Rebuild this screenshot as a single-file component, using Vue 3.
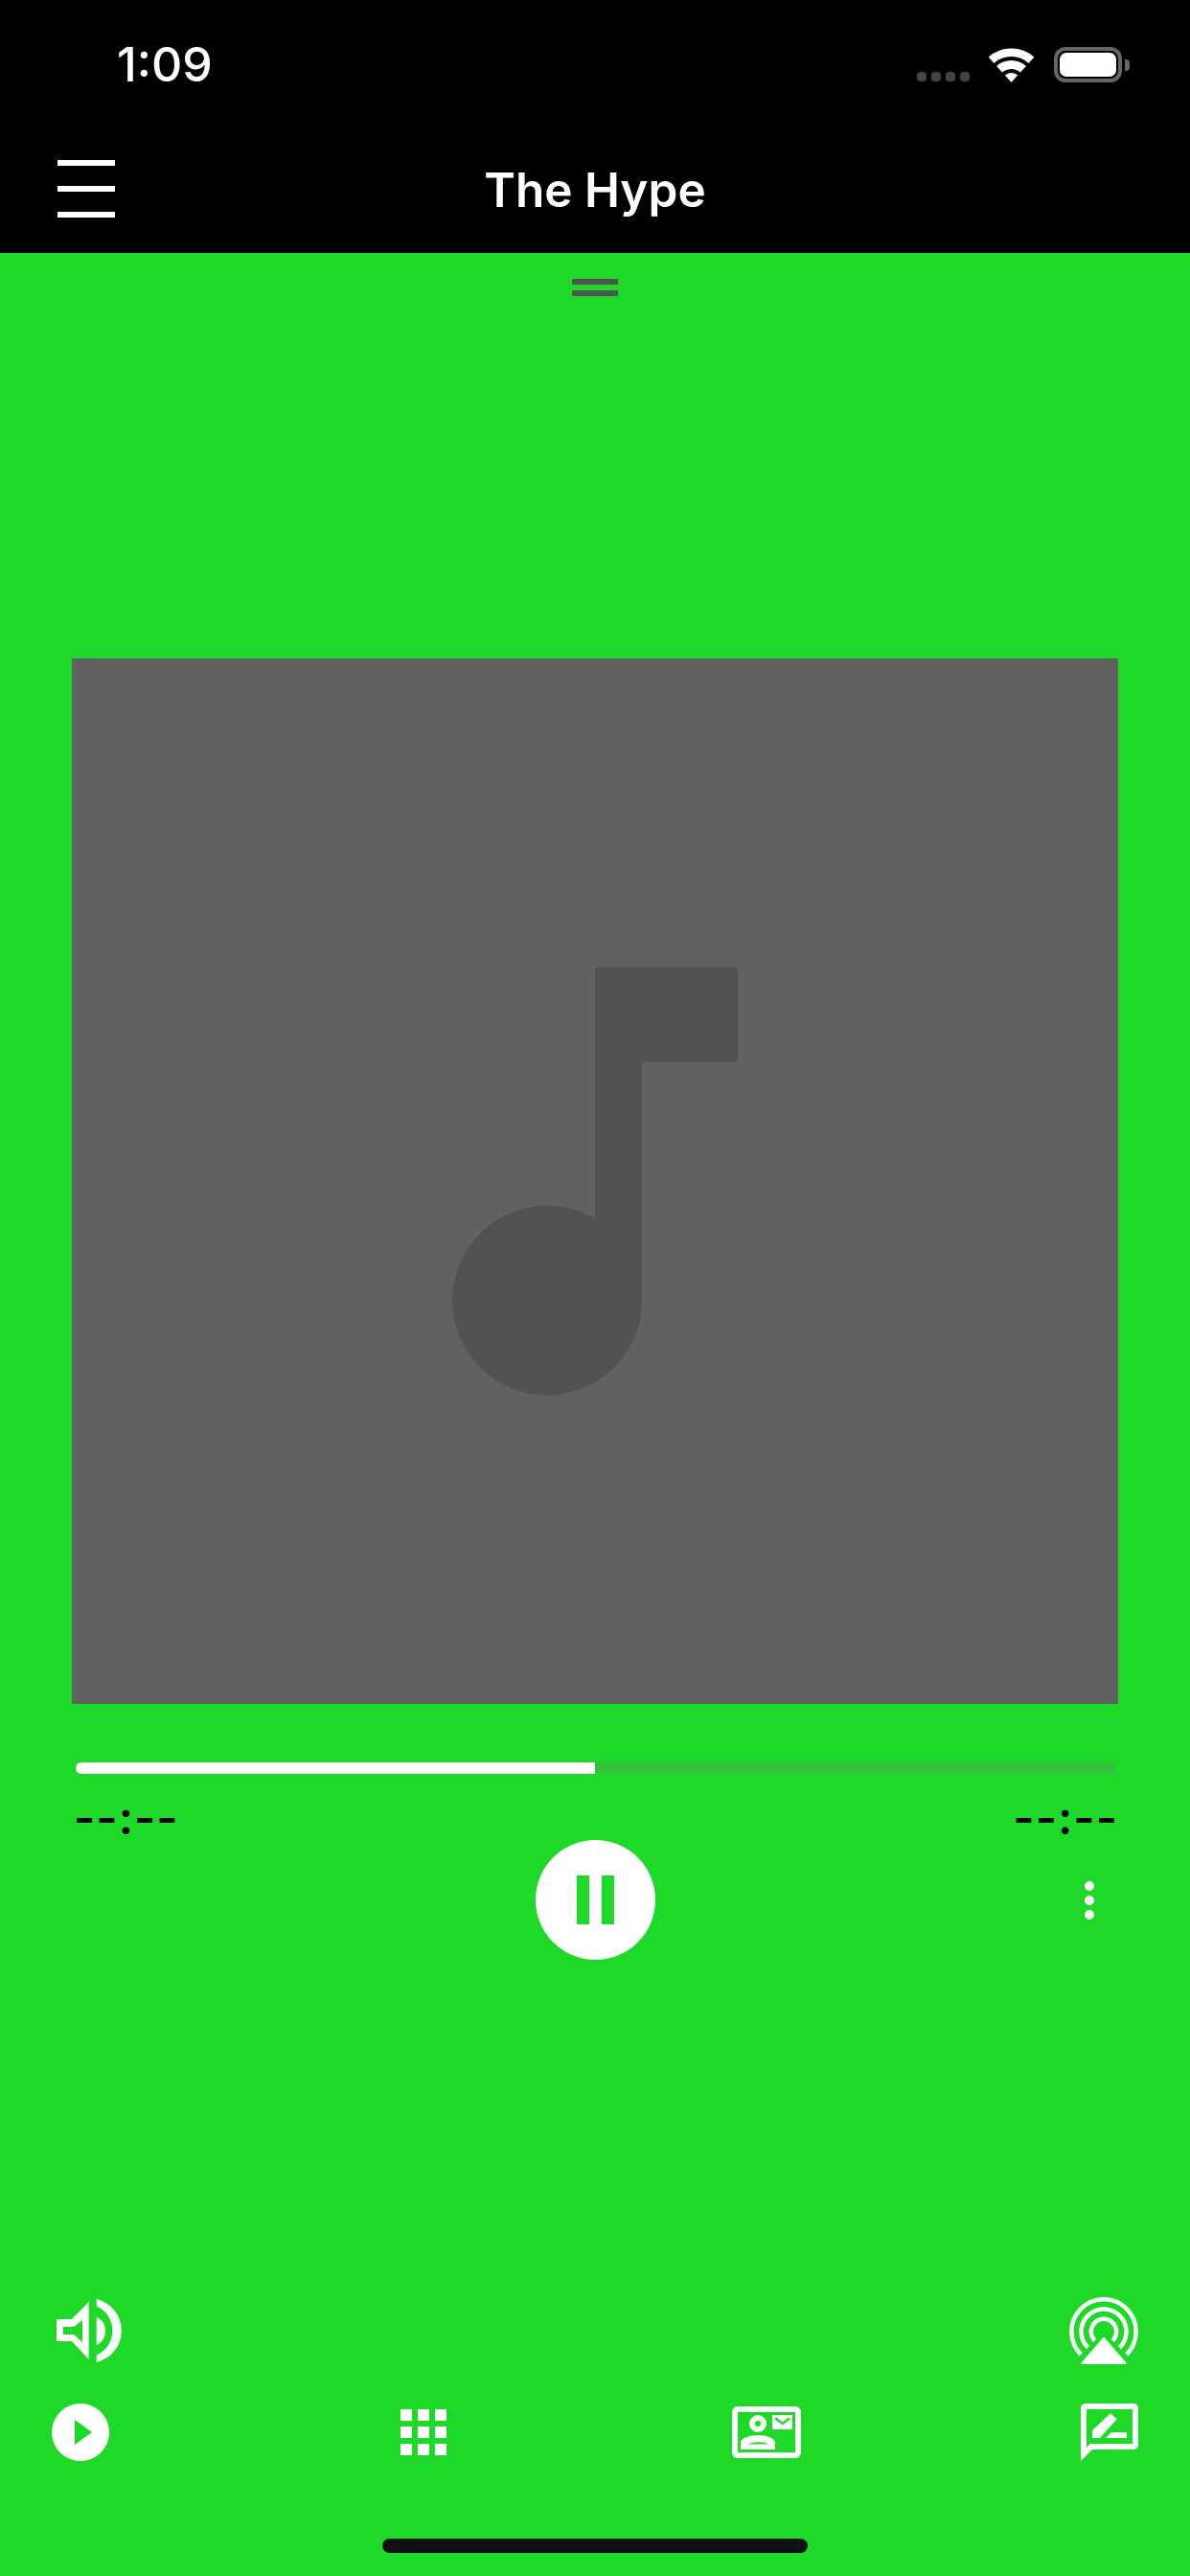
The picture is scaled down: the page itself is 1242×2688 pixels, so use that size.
<template>
  <div class="player">
    <header class="top">
      <div class="status">
        <span class="clock">1:09</span>
        <div class="status-icons">
          <div class="signal"><i></i><i></i><i></i><i></i></div>
          <svg class="wifi" viewBox="0 0 47 36" width="47" height="36">
            <path d="M-.25 9.6A35.5 35.5 0 0 1 47.25 9.6L41.6 16A27 27 0 0 0 5.4 16Z" />
            <path d="M8.1 18.9A23 23 0 0 1 38.9 18.9L32.9 25.6A14 14 0 0 0 14.1 25.6Z" />
            <path d="M16.8 28.6A10 10 0 0 1 30.2 28.6L23.5 36Z" />
          </svg>
          <div class="battery"><div class="battery-fill"></div></div>
        </div>
      </div>
      <div class="nav">
        <div class="burger"><i></i><i></i><i></i></div>
        <span class="title">The Hype</span>
      </div>
    </header>

    <div class="handle"><i></i><i></i></div>

    <div class="artwork">
      <svg viewBox="0 0 298 448" width="298" height="448">
        <path d="M149 0H298V99H198V349A99 99 0 1 1 149 262.5Z" fill="#525252" />
      </svg>
    </div>

    <div class="progress"><div class="progress-fill" :style="{ width: progress + '%' }"></div></div>
    <div class="times">
      <span>--:--</span>
      <span>--:--</span>
    </div>

    <div class="controls">
      <div></div>
      <button class="pause">
        <i></i><i></i>
      </button>
      <div class="more"><i></i><i></i><i></i></div>
    </div>

    <div class="bottom">
      <div class="row row-top">
        <svg viewBox="0 0 68 66" width="68" height="66" fill="#fff">
          <path fill-rule="evenodd" d="M0 21H16L33.7 3V63L16 44H0ZM7 29V37H18L27 45V22L18 29Z" />
          <path d="M41.7 19C47 21 51 26 51 33C51 40 47 46 41.7 48Z" />
          <path d="M41.7 0A33.9 33.9 0 0 1 41.7 66V58.5A27.8 27.8 0 0 0 41.7 7.5Z" />
        </svg>
        <svg viewBox="0 0 72 70" width="72" height="70">
          <g fill="none" stroke="#fff" stroke-width="4.5">
            <path d="M12.2 59.8A33.7 33.7 0 1 1 59.8 59.8" />
            <path d="M19.4 52.6A23.5 23.5 0 1 1 52.6 52.6" />
            <path d="M26.7 45.3A13.2 13.2 0 1 1 45.3 45.3" />
          </g>
          <path d="M36 43L58.5 69H13.5Z" fill="#fff" stroke="#fff" stroke-width="2" stroke-linejoin="round" />
        </svg>
      </div>
      <div class="row row-tabs">
        <div class="slot">
          <svg viewBox="0 0 60 60" width="60" height="60">
            <circle cx="30" cy="30" r="30" fill="#fff" />
            <path d="M24 17L42 30L24 43Z" fill="#1ed928" />
          </svg>
        </div>
        <div class="slot">
          <div class="keypad"><i v-for="n in 9" :key="n"></i></div>
        </div>
        <div class="slot">
          <svg viewBox="0 0 72 54" width="72" height="54">
            <rect x="3" y="3" width="66" height="48" rx="3" fill="none" stroke="#fff" stroke-width="6" />
            <circle cx="27" cy="18" r="6" fill="none" stroke="#fff" stroke-width="6" />
            <path fill="#fff" fill-rule="evenodd" d="M9 45V38C9 33 18 30 27 30C36 30 45 33 45 38V45ZM17 39.5H38C33 36.5 22 36.5 17 39.5Z" />
            <rect x="42" y="9" width="21" height="15" fill="#fff" />
            <path d="M45 12.3L52.7 18L60.3 12.3" fill="none" stroke="#1ed928" stroke-width="2.5" />
          </svg>
        </div>
        <div class="slot">
          <svg viewBox="0 0 60 60" width="60" height="60" fill="#fff">
            <path fill-rule="evenodd" d="M0 60V5A5 5 0 0 1 5 0H55A5 5 0 0 1 60 5V43A5 5 0 0 1 55 48H12ZM6 46L10 42H54V6H6Z" />
            <path d="M12 36V28L31 10.3L37.7 16.3L20 36Z" />
            <path d="M26 36L32 30H48V36Z" />
          </svg>
        </div>
      </div>
      <div class="home"></div>
    </div>
  </div>
</template>

<script setup>
const progress = 50
</script>

<style>
body {
  background: #1ed928;
}
</style>

<style scoped>
.player {
  width: 1242px;
  height: 2688px;
  display: flex;
  flex-direction: column;
  align-items: center;
  background: #1ed928;
  font-family: Inter, "Liberation Sans", sans-serif;
  overflow: hidden;
}

.player i {
  display: block;
}

.top {
  width: 100%;
  height: 264px;
  background: #000;
  color: #fff;
  flex-shrink: 0;
}

.status {
  height: 132px;
  padding: 36px 71px 0 122px;
  box-sizing: border-box;
  display: flex;
  justify-content: space-between;
  align-items: flex-start;
}

.clock {
  font-size: 50px;
  line-height: 62px;
  font-weight: 500;
}

.status-icons {
  display: flex;
  align-items: flex-end;
  padding-top: 13px;
}

.signal {
  display: flex;
  gap: 5px;
  margin-right: 20px;
  padding-bottom: 1px;
}

.signal i {
  width: 10px;
  height: 10px;
  border-radius: 4px;
  background: #444;
}

.wifi {
  fill: #fff;
  overflow: visible;
  margin-right: 21px;
}

.battery {
  position: relative;
  width: 71px;
  height: 37px;
  border: 4px solid #666;
  border-radius: 12px;
  box-sizing: border-box;
  padding: 2px;
}

.battery::after {
  content: "";
  position: absolute;
  right: -12px;
  top: 9px;
  width: 5px;
  height: 12px;
  border-radius: 0 4px 4px 0;
  background: #666;
}

.battery-fill {
  height: 100%;
  border-radius: 7px;
  background: #fff;
}

.nav {
  position: relative;
  height: 132px;
  display: flex;
  justify-content: center;
}

.burger {
  position: absolute;
  left: 60px;
  top: 35px;
  width: 60px;
  display: flex;
  flex-direction: column;
  gap: 21px;
}

.burger i {
  height: 6px;
  background: #fff;
}

.title {
  font-size: 49.5px;
  line-height: 66px;
  font-weight: 600;
  margin-top: 33px;
}

.handle {
  margin-top: 27px;
  width: 48px;
  display: flex;
  flex-direction: column;
  gap: 6px;
}

.handle i {
  height: 6px;
  background: #525252;
}

.artwork {
  margin-top: 378px;
  width: 1092px;
  height: 1091px;
  flex-shrink: 0;
  background: #616161;
  display: flex;
  align-items: flex-start;
  justify-content: flex-start;
  padding: 322px 0 0 397px;
  box-sizing: border-box;
}

.progress {
  margin-top: 61px;
  width: 1085px;
  height: 12px;
  border-radius: 6px;
  overflow: hidden;
  background: #35c23b;
}

.progress-fill {
  height: 100%;
  background: #fff;
}

.times {
  width: 1090px;
  display: flex;
  justify-content: space-between;
  margin: 23px 0 0 2px;
  font-size: 48px;
  line-height: 46px;
  font-weight: 600;
  letter-spacing: 1px;
  color: #000;
}

.controls {
  width: 100%;
  display: grid;
  grid-template-columns: 1fr auto 1fr;
  align-items: center;
}

.pause {
  width: 125px;
  height: 125px;
  padding: 0;
  border: none;
  border-radius: 50%;
  background: #fff;
  display: flex;
  align-items: center;
  justify-content: center;
  gap: 13px;
}

.pause i {
  width: 13px;
  height: 51px;
  background: #1ed928;
}

.more {
  justify-self: end;
  margin-right: 100px;
  display: flex;
  flex-direction: column;
  gap: 5px;
}

.more i {
  width: 10px;
  height: 10px;
  border-radius: 50%;
  background: #fff;
}

.bottom {
  width: 100%;
  margin-top: auto;
  display: flex;
  flex-direction: column;
}

.row {
  display: flex;
  justify-content: space-between;
  align-items: center;
}

.row-top {
  padding: 0 54px 0 59px;
}

.row-tabs {
  margin-top: 41px;
  padding: 0 48px;
}

.slot {
  width: 72px;
  display: flex;
  justify-content: center;
}

.keypad {
  display: grid;
  grid-template-columns: repeat(3, 12px);
  grid-auto-rows: 12px;
  gap: 6px;
}

.keypad i {
  background: #fff;
}

.home {
  align-self: center;
  width: 444px;
  height: 15px;
  margin: 81px 0 24px;
  border-radius: 8px;
  background: #111;
}
</style>
